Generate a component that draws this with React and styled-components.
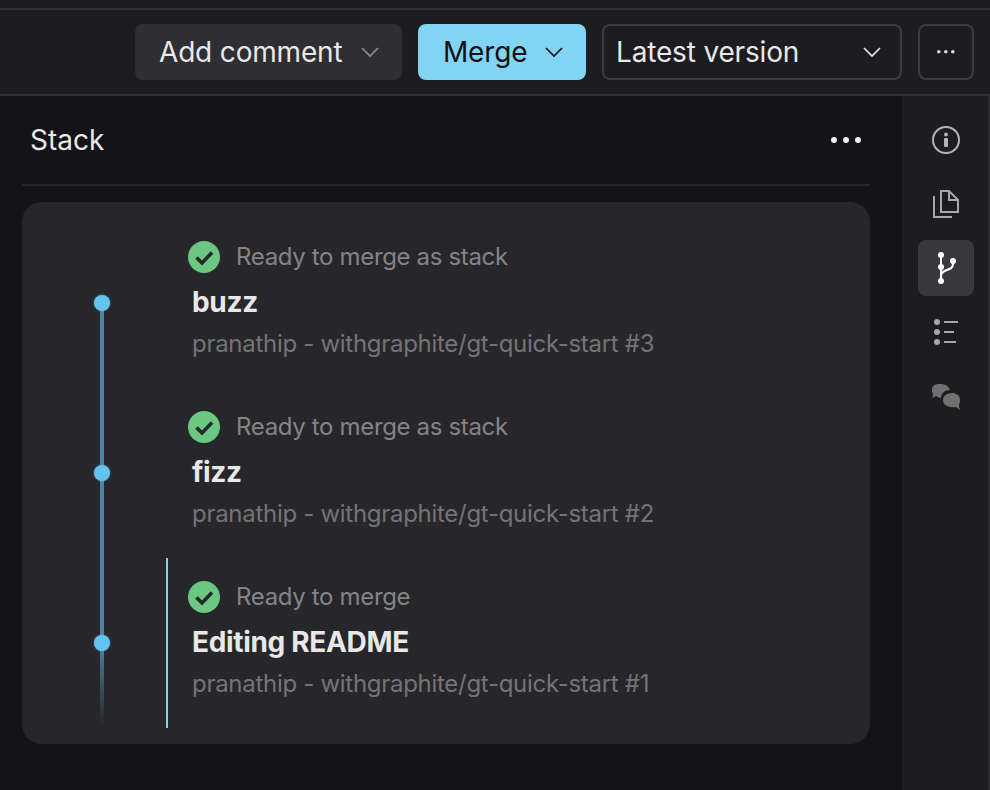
import React from "react";
import styled, { createGlobalStyle } from "styled-components";

const Global = createGlobalStyle`
  html, body { margin: 0; padding: 0; background: #131318; }
  * { box-sizing: border-box; }
  body { font-family: Inter, "Liberation Sans", sans-serif; -webkit-font-smoothing: antialiased; }
`;

const Page = styled.div`
  width: 990px;
  height: 790px;
  overflow: hidden;
  display: flex;
  flex-direction: column;
  background: #131318;
`;
const TopStrip = styled.div`
  height: 10px;
  flex: none;
  background: #1c1c21;
  border-bottom: 2px solid #2e2e33;
`;
const Toolbar = styled.header`
  height: 86px;
  flex: none;
  display: flex;
  align-items: center;
  justify-content: flex-end;
  gap: 16px;
  padding: 0 16px 0 0;
  background: #1c1c21;
  border-bottom: 2px solid #2e2e33;
`;
const Button = styled.div`
  height: 56px;
  width: ${(p) => p.$w}px;
  display: flex;
  align-items: center;
  justify-content: space-between;
  padding: ${(p) => p.$pad};
  border-radius: 8px;
  font-size: 28px;
  line-height: 34px;
  letter-spacing: -0.17px;
  color: ${(p) => (p.$kind === "primary" ? "#0f1115" : "#e8e8e8")};
  background: ${(p) => (p.$kind === "primary" ? "#82d4f5" : p.$kind === "soft" ? "#2e2e33" : "transparent")};
  border: ${(p) => (p.$kind === "outline" ? "2px solid #3c3c41" : "none")};
`;
const SquareButton = styled.div`
  width: 56px;
  height: 56px;
  display: flex;
  align-items: center;
  justify-content: center;
  border-radius: 8px;
  border: 2px solid #3c3c41;
`;
const Body = styled.div`
  flex: 1;
  min-height: 0;
  display: flex;
`;
const Main = styled.main`
  width: 902px;
  flex: none;
  padding: 0 32px 0 22px;
`;
const StackHeader = styled.div`
  height: 90px;
  display: flex;
  align-items: center;
  justify-content: space-between;
  padding: 0 9px 0 8px;
  border-bottom: 2px solid #26262b;
`;
const StackTitle = styled.h2`
  margin: 0;
  font-size: 28px;
  line-height: 34px;
  font-weight: 400;
  color: #e8e8e8;
`;
const Card = styled.section`
  margin-top: 16px;
  height: 542px;
  padding: 16px 0 0 64px;
  background: #27272b;
  border-radius: 20px;
`;
const Row = styled.article`
  height: 170px;
  display: flex;
`;
const Rail = styled.div`
  width: 32px;
  flex: none;
  margin-right: 48px;
  display: flex;
  flex-direction: column;
  align-items: center;
`;
const Segment = styled.div`
  flex: 1;
  width: 4px;
  filter: blur(0.7px);
  background: ${(p) =>
    p.$fade
      ? "linear-gradient(180deg, #4b84a3 0%, rgba(75,132,163,0) 100%)"
      : p.$off
      ? "transparent"
      : "#4b84a3"};
`;
const FadeSegment = styled(Segment)`
  flex: none;
  height: 82px;
  margin-bottom: 3px;
`;
const Dot = styled.div`
  width: 16px;
  height: 16px;
  flex: none;
  margin: -8px 0;
  position: relative;
  z-index: 1;
  border-radius: 50%;
  background: #65c3ef;
  box-shadow: 0 0 2px rgba(98, 193, 239, 0.7);
`;
const Content = styled.div`
  flex: 1;
  padding-left: 20px;
  border-left: 2px solid ${(p) => (p.$current ? "#82d4f5" : "transparent")};
`;
const Status = styled.div`
  height: 32px;
  margin-top: 23px;
  display: flex;
  align-items: center;
  gap: 16px;
  font-size: 24px;
  line-height: 32px;
  letter-spacing: -0.34px;
  color: #848488;
`;
const Title = styled.div`
  margin-top: 12px;
  padding-left: 4px;
  font-size: 28px;
  line-height: 34px;
  letter-spacing: -0.33px;
  font-weight: 700;
  color: #e8e8e8;
`;
const Sub = styled.div`
  margin-top: 9px;
  padding-left: 4px;
  font-size: 24px;
  line-height: 32px;
  letter-spacing: -0.29px;
  color: #747478;
`;
const Side = styled.aside`
  flex: 1;
  display: flex;
  flex-direction: column;
  gap: 8px;
  padding: 16px 14px 0 16px;
  background: #1c1c21;
  border-right: 2px solid #2e2e33;
`;
const SideButton = styled.div`
  width: 56px;
  height: 56px;
  display: flex;
  align-items: center;
  justify-content: center;
  border-radius: 8px;
  background: ${(p) => (p.$active ? "#39393d" : "transparent")};
`;

const Chevron = ({ color }) => (
  <svg width="20" height="12" viewBox="0 0 20 12" fill="none" stroke={color} strokeWidth="1.7">
    <path d="M2 2l8 8 8-8" />
  </svg>
);
const Check = () => (
  <svg width="32" height="32" viewBox="0 0 32 32">
    <circle cx="16" cy="16" r="16" fill="#6cc783" />
    <path d="M8.5 16.5l5.5 5.5 10-10.5" fill="none" stroke="#27272b" strokeWidth="3.6" />
  </svg>
);
const Info = () => (
  <svg width="32" height="32" viewBox="0 0 32 32" fill="none">
    <circle cx="16" cy="16" r="13" stroke="#b4b4b4" strokeWidth="2" />
    <circle cx="16" cy="10.5" r="2" fill="#b4b4b4" />
    <rect x="14" y="14" width="4" height="9" rx="1" fill="#b4b4b4" />
  </svg>
);
const Copy = () => (
  <svg width="32" height="32" viewBox="0 0 32 32" fill="none" stroke="#a8a8a8" strokeWidth="2">
    <path d="M11 3h8l9 9v12H11z" />
    <path d="M19 3v9h9" />
    <path d="M4 8v21h18" />
  </svg>
);
const Branch = () => (
  <svg width="32" height="32" viewBox="0 0 32 32" fill="none" stroke="#fff" strokeWidth="2">
    <path d="M11 3v26" />
    <path d="M23 9v3c0 4-3 5-6 6s-6 2-6 6" />
    <g fill="#fff" stroke="none">
      <circle cx="11" cy="3" r="3" />
      <circle cx="11" cy="15" r="3" />
      <circle cx="11" cy="29" r="3" />
      <circle cx="23" cy="9" r="3" />
    </g>
  </svg>
);
const List = () => (
  <svg width="32" height="32" viewBox="0 0 32 32" fill="#a8a8a8" stroke="none">
    <circle cx="7" cy="6" r="3" />
    <circle cx="7" cy="16" r="3" />
    <circle cx="7" cy="26" r="3" />
    <rect x="14" y="5" width="14" height="2" />
    <rect x="14" y="15" width="10" height="2" />
    <rect x="14" y="25" width="12" height="2" />
  </svg>
);
const Comments = () => (
  <svg width="32" height="32" viewBox="0 0 32 32">
    <path d="M2 9C2 6 5 4 10 4s9 2 10 6c-5 0-9 3-9 8-2 0-3-1-5-2l-4 2c1-2 1-3 1-4-1-1-1-3-1-5z" fill="#707070" />
    <path d="M22 13c4 0 8 2 8 7 0 2 0 3-1 4 0 2 0 3 1 6l-4-3c-6 1-13-1-13-7 0-4 4-7 9-7z" fill="#707070" />
  </svg>
);
const Dots = ({ r, gap, fill }) => (
  <svg width={r * 2 + gap * 2} height={r * 2} viewBox={`0 0 ${r * 2 + gap * 2} ${r * 2}`} fill={fill}>
    <circle cx={r} cy={r} r={r} />
    <circle cx={r + gap} cy={r} r={r} />
    <circle cx={r + gap * 2} cy={r} r={r} />
  </svg>
);

const rows = [
  { status: "Ready to merge as stack", title: "buzz", n: 3, top: "off" },
  { status: "Ready to merge as stack", title: "fizz", n: 2 },
  { status: "Ready to merge", title: "Editing README", n: 1, current: true, bottom: "fade" },
];

export default function App() {
  return (
    <Page>
      <Global />
      <TopStrip />
      <Toolbar>
        <Button $kind="soft" $w={267} $pad="0 22px 0 24px">
          Add comment <Chevron color="#8f8f92" />
        </Button>
        <Button $kind="primary" $w={168} $pad="0 22px 0 25px">
          Merge <Chevron color="#0f1115" />
        </Button>
        <Button $kind="outline" $w={300} $pad="0 18px 0 12px">
          Latest version <Chevron color="#e8e8e8" />
        </Button>
        <SquareButton>
          <Dots r={1.8} gap={7} fill="#dcdcdc" />
        </SquareButton>
      </Toolbar>
      <Body>
        <Main>
          <StackHeader>
            <StackTitle>Stack</StackTitle>
            <Dots r={3} gap={12} fill="#f0f0f0" />
          </StackHeader>
          <Card>
            {rows.map((r) => (
              <Row key={r.n}>
                <Rail>
                  <Segment $off={r.top === "off"} />
                  <Dot />
                  {r.bottom === "fade" ? <FadeSegment $fade /> : <Segment />}
                </Rail>
                <Content $current={r.current}>
                  <Status>
                    <Check />
                    {r.status}
                  </Status>
                  <Title>{r.title}</Title>
                  <Sub>pranathip - withgraphite/gt-quick-start #{r.n}</Sub>
                </Content>
              </Row>
            ))}
          </Card>
        </Main>
        <Side>
          <SideButton><Info /></SideButton>
          <SideButton><Copy /></SideButton>
          <SideButton $active><Branch /></SideButton>
          <SideButton><List /></SideButton>
          <SideButton><Comments /></SideButton>
        </Side>
      </Body>
    </Page>
  );
}
